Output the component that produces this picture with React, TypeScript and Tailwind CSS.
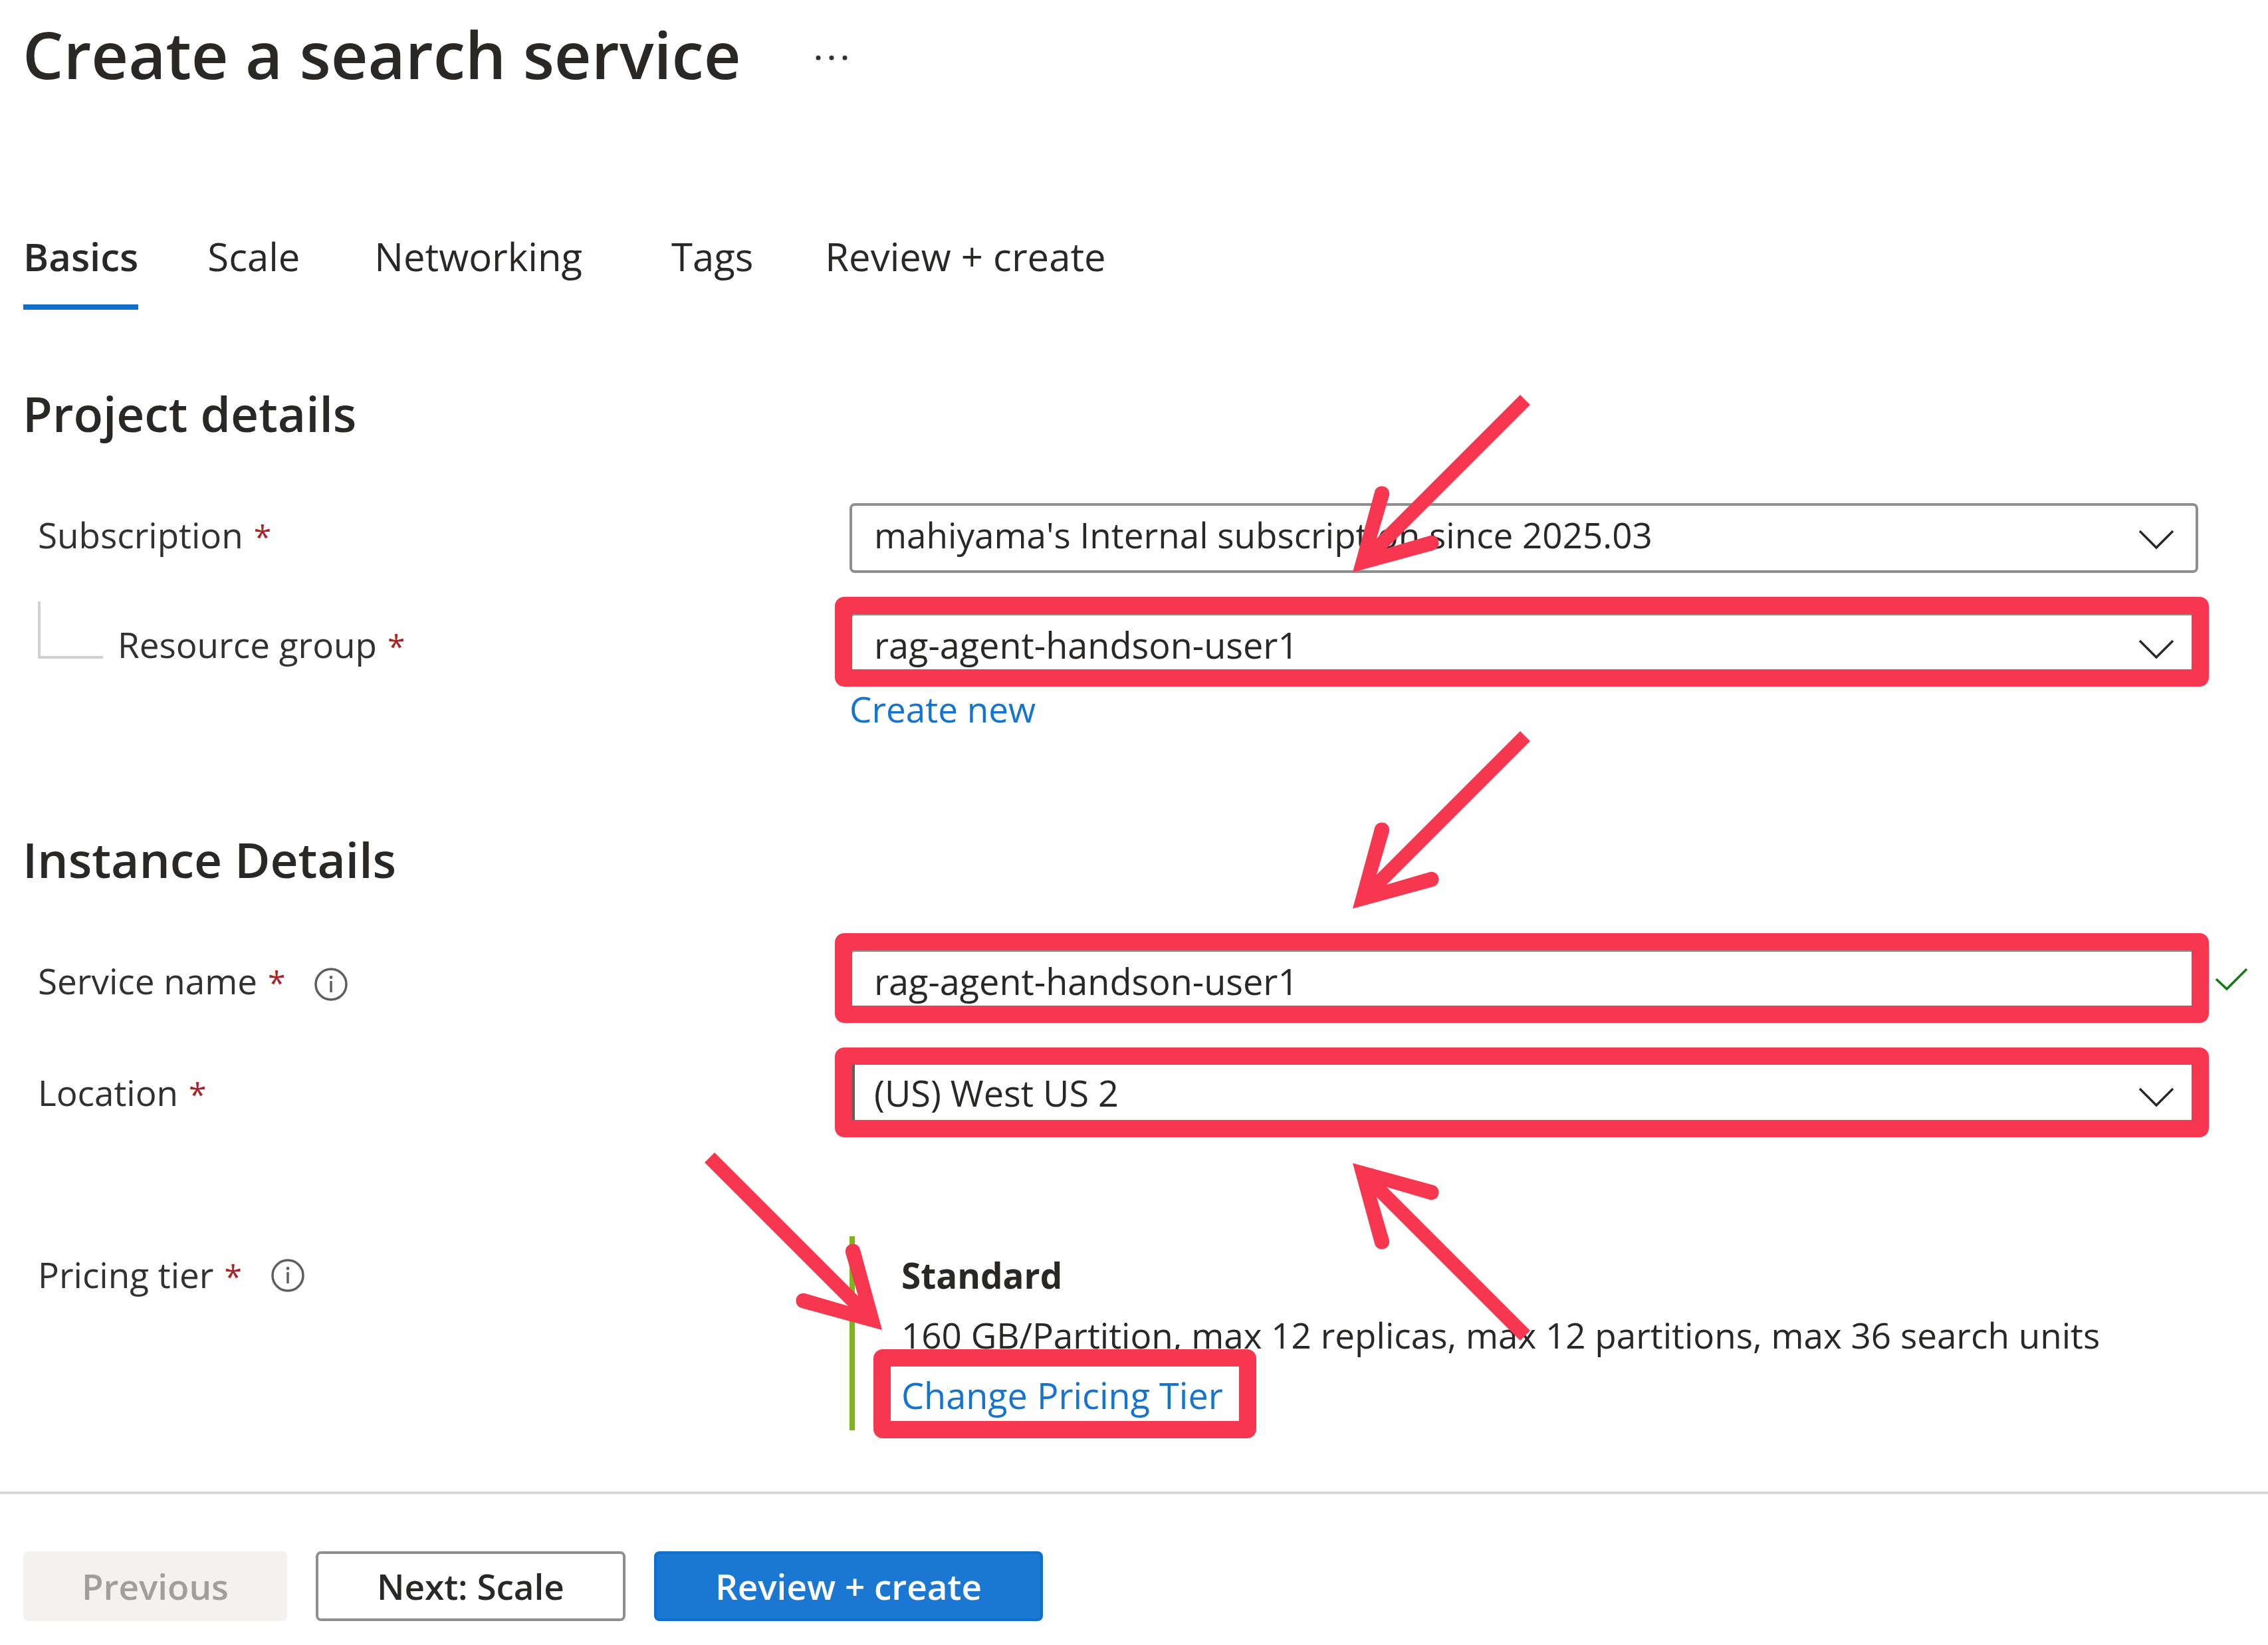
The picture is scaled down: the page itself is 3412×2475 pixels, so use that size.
import type { ReactNode } from "react";

const fieldBase =
  "block w-full h-[105px] rounded-lg border-4 border-[#8f8e8d] bg-white pb-[10px] pl-[33px] text-[#292827] outline-none";

function Chevron() {
  return (
    <svg
      aria-hidden="true"
      className="pointer-events-none absolute right-9 top-10 h-[30px] w-[54px]"
      viewBox="0 0 54 30"
      fill="none"
      stroke="#292827"
      strokeWidth="3.5"
    >
      <path d="M2 2 L27 27 L52 2" />
    </svg>
  );
}

function InfoIcon() {
  return (
    <svg aria-hidden="true" className="h-[50px] w-[50px]" viewBox="0 0 50 50" fill="none">
      <circle cx="25" cy="25" r="23" stroke="#605e5c" strokeWidth="3.5" />
      <path d="M25 20 V37" stroke="#605e5c" strokeWidth="3.5" />
      <circle cx="25" cy="14.5" r="2.4" fill="#605e5c" />
    </svg>
  );
}

/* Hand-drawn style arrow, tip in the lower left corner. */
function Arrow({ className }: { className: string }) {
  return (
    <svg
      aria-hidden="true"
      className={`pointer-events-none absolute h-[268px] w-[268px] ${className}`}
      viewBox="0 -268 268 268"
      fill="#f6374f"
    >
      <path d="M0 0 L33 -121 C36 -134 57 -132 55 -116 L36 -51 L252 -267 L267 -252 L51 -36 L116 -55 C132 -57 134 -36 121 -33 Z" />
    </svg>
  );
}

function Highlight({ className }: { className: string }) {
  return (
    <span
      aria-hidden="true"
      className={`pointer-events-none absolute rounded-[14px] border-[26px] border-[#f6374f] ${className}`}
    />
  );
}

function Required() {
  return <span className="ml-4 text-[48px] text-[#a4262c]">*</span>;
}

function Row({
  label,
  htmlFor,
  info,
  nested,
  className = "",
  children,
}: {
  label: string;
  htmlFor: string;
  info?: boolean;
  nested?: boolean;
  className?: string;
  children: ReactNode;
}) {
  return (
    <div className={`grid grid-cols-[1221px_minmax(0,1fr)] pl-[57px] pr-[105px] ${className}`}>
      <div className="flex h-[105px] items-center">
        {nested && (
          <span className="mr-[22px] mb-[53px] h-[86px] w-[98px] border-b-4 border-l-4 border-[#d0d0d0]" />
        )}
        <label htmlFor={htmlFor} className="pb-2">
          {label}
          <Required />
        </label>
        {info && (
          <button type="button" aria-label={`About ${label}`} className="ml-11">
            <InfoIcon />
          </button>
        )}
      </div>
      <div className="relative">{children}</div>
    </div>
  );
}

const tabs = [
  { label: "Scale", href: "#scale", className: "mr-2" },
  { label: "Networking", href: "#networking", className: "mr-[30px]" },
  { label: "Tags", href: "#tags", className: "mr-1" },
  { label: "Review + create", href: "#review", className: "" },
];

export default function App() {
  return (
    <main className="min-h-screen bg-white pt-4 font-['Open_Sans','Noto_Sans',sans-serif] text-[53px] leading-[72px] text-[#323130]">
      <header className="flex items-center gap-[110px] pl-[34px]">
        <h1 className="text-[97px] leading-[130px] font-semibold text-[#292827]">
          Create a search service
        </h1>
        <button type="button" aria-label="More actions" className="mt-3">
          <svg className="h-3 w-[52px]" viewBox="0 0 52 12" fill="#323130">
            <circle cx="6" cy="6" r="3.5" />
            <circle cx="26" cy="6" r="3.5" />
            <circle cx="46" cy="6" r="3.5" />
          </svg>
        </button>
      </header>

      <nav className="mt-[200px] flex gap-[104px] pl-[35px] text-[58px] leading-[80px] text-[#292827]">
        <a href="#basics" aria-current="page" className="border-b-8 border-[#0f6fd0] pb-8 font-semibold">
          Basics
        </a>
        {tabs.map((tab) => (
          <a key={tab.href} href={tab.href} className={tab.className}>
            {tab.label}
          </a>
        ))}
      </nav>

      <form onSubmit={(event) => event.preventDefault()}>
        <h2 className="mt-[108px] pl-[34px] text-[73px] leading-[96px] font-semibold text-[#292827]">
          Project details
        </h2>

        <Row label="Subscription" htmlFor="subscription" className="mt-[87px]">
          <select id="subscription" className={`${fieldBase} appearance-none text-[53px]`}>
            <option>mahiyama's Internal subscription since 2025.03</option>
          </select>
          <Chevron />
        </Row>

        <Row label="Resource group" htmlFor="group" nested className="mt-[60px]">
          <select id="group" className={`${fieldBase} appearance-none text-[54px]`}>
            <option>rag-agent-handson-user1</option>
          </select>
          <Chevron />
          <Highlight className="-top-6 -right-4 -left-[22px] h-[135px]" />
          <Arrow className="bottom-[166px] left-[757px]" />
        </Row>
        <div className="mt-1 pl-[1278px]">
          <a href="#new" className="text-[#1474cf]">
            Create new
          </a>
        </div>

        <h2 className="mt-[142px] pl-[34px] text-[73px] leading-[96px] font-semibold text-[#292827]">
          Instance Details
        </h2>

        <Row label="Service name" htmlFor="name" info className="mt-[87px]">
          <input
            id="name"
            type="text"
            defaultValue="rag-agent-handson-user1"
            className={`${fieldBase} text-[54px]`}
          />
          <Highlight className="-top-6 -right-4 -left-[22px] h-[135px]" />
          <Arrow className="bottom-[166px] left-[757px]" />
          <svg
            aria-hidden="true"
            className="absolute top-7 -right-[75px] h-9 w-[50px]"
            viewBox="0 0 50 36"
            fill="none"
            stroke="#107c10"
            strokeWidth="3.5"
          >
            <path d="M2 17 L18 32 L48 2" />
          </svg>
        </Row>

        <Row label="Location" htmlFor="location" className="mt-[63px]">
          <select id="location" className={`${fieldBase} appearance-none text-[54px]`}>
            <option>(US) West US 2</option>
          </select>
          <Chevron />
          <span className="absolute inset-y-1 left-1 w-1 bg-[#605e5c]" />
          <Highlight className="-top-5 -right-4 -left-[22px] h-[135px]" />
          <Arrow className="top-[154px] left-[757px] -scale-y-100" />
        </Row>

        <div className="mt-[159px] grid grid-cols-[1221px_minmax(0,1fr)] pr-[105px] pl-[57px] leading-[90px]">
          <div className="flex h-[104px] items-center pt-[14px]">
            <span>
              Pricing tier
              <Required />
            </span>
            <button type="button" aria-label="About Pricing tier" className="ml-11">
              <InfoIcon />
            </button>
          </div>
          <div className="border-l-8 border-[#7fb51c] pt-[14px] pb-2 pl-[70px] text-[#292827]">
            <p className="font-bold">Standard</p>
            <p>160 GB/Partition, max 12 replicas, max 12 partitions, max 36 search units</p>
            <p className="relative w-fit text-[54px]">
              <a href="#tier" className="text-[#1474cf]">
                Change Pricing Tier
              </a>
              <Highlight className="-top-6 -right-[50px] -left-[42px] h-[134px]" />
              <Arrow className="right-full bottom-[143px] mr-[29px] -scale-x-100" />
            </p>
          </div>
        </div>

        <footer className="mt-[92px] flex gap-[43px] border-t-4 border-[#d8d8d8] pt-[86px] pb-[35px] pl-[35px] font-semibold">
          <button type="button" disabled className="h-[105px] rounded-lg bg-[#f3f2f1] px-[88px] text-[#a19f9d]">
            Previous
          </button>
          <button type="button" className="h-[105px] rounded-lg border-4 border-[#8f8e8d] bg-white px-[88px] text-[#292827]">
            Next: Scale
          </button>
          <button type="submit" className="h-[105px] rounded-lg border-4 border-[#0f6fd0] bg-[#1a78d2] px-[88px] text-white">
            Review + create
          </button>
        </footer>
      </form>
    </main>
  );
}
